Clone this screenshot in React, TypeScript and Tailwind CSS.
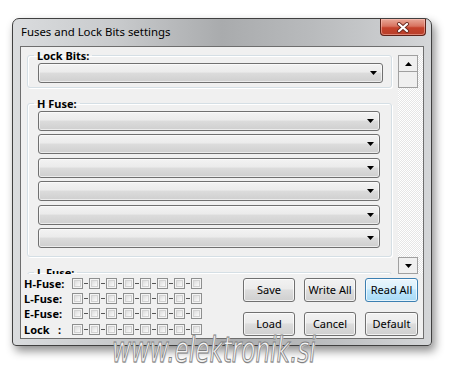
import React from "react";

const FONT = { fontFamily: '"Noto Sans", "Open Sans", sans-serif' };

function Combo({ wide }: { wide?: boolean }) {
  return (
    <div className={`relative h-[20px] ${wide ? "w-[345px]" : "w-[342px]"} rounded-[3px] border border-[#707070] bg-[linear-gradient(to_bottom,#f3f3f3_0%,#ebebeb_45%,#dcdcdc_50%,#cfcfcf_100%)] shadow-[inset_0_0_0_1px_rgba(255,255,255,0.6)] flex items-center justify-end pr-[5px]`}>
      <svg width="7" height="4" viewBox="0 0 7 4"><path d="M0 0H7L3.5 4Z" fill="#000" /></svg>
    </div>
  );
}

function Group({ label, children, className }: { label: string; children: React.ReactNode; className?: string }) {
  return (
    <fieldset className={`w-[365px] rounded-[3px] border border-[#d5dfe5] shadow-[inset_1px_1px_0_#fff,1px_1px_0_#fff] pl-[10px] pr-[8px] ${className ?? ""}`}>
      <legend className="ml-[-4px] px-[3px] text-[11px] font-bold leading-[15px] text-black">{label}</legend>
      {children}
    </fieldset>
  );
}

function Check() {
  return (
    <div className="w-[11px] h-[11px] border border-[#8e8f8f] bg-[#f4f4f4] p-[1px]">
      <div className="w-full h-full border border-[#d2d2d2] bg-[linear-gradient(135deg,#dcdcdc,#fbfbfb)]" />
    </div>
  );
}

function BitRow({ label }: { label: string }) {
  const items: React.ReactNode[] = [];
  for (let i = 0; i < 8; i++) {
    if (i > 0)
      items.push(
        <div key={"d" + i} className="w-[6px] flex justify-center">
          <div className="w-[4px] h-[1px] bg-[#555]" />
        </div>
      );
    items.push(<Check key={"c" + i} />);
  }
  return (
    <div className="h-[15.33px] flex items-center">
      <div className="w-[48px] text-[11px] font-bold leading-none text-black whitespace-pre">{label}</div>
      <div className="flex items-center">{items}</div>
    </div>
  );
}

function Btn({ children, focus }: { children: React.ReactNode; focus?: boolean }) {
  return (
    <div
      className={`h-[24px] rounded-[3px] border flex items-center justify-center text-[11px] text-black ${
        focus
          ? "border-[#3c7fb1] bg-[linear-gradient(to_bottom,#eaf6fd_0%,#d9f0fc_45%,#bee6fd_50%,#a7d9f5_100%)] shadow-[inset_0_0_0_1px_rgba(255,255,255,0.7)]"
          : "border-[#707070] bg-[linear-gradient(to_bottom,#f2f2f2_0%,#ebebeb_45%,#dddddd_50%,#cfcfcf_100%)] shadow-[inset_0_0_0_1px_rgba(255,255,255,0.7)]"
      }`}
    >
      {children}
    </div>
  );
}

function ScrollBtn({ up }: { up?: boolean }) {
  return (
    <div className="w-[20px] h-[17px] border border-[#a0a0a0] bg-[#f0f0f0] flex items-center justify-center">
      <svg width="7" height="4" viewBox="0 0 7 4">
        {up ? <path d="M3.5 0L7 4H0Z" fill="#000" /> : <path d="M0 0H7L3.5 4Z" fill="#000" />}
      </svg>
    </div>
  );
}

export default function App() {
  return (
    <div className="relative w-[452px] h-[371px] overflow-hidden bg-white pl-[12px] pt-[18px]" style={FONT}>
      <div className="w-[420px] h-[328px] flex flex-col rounded-t-[7px] rounded-b-[4px] border border-[#404040] shadow-[3px_5px_10px_rgba(0,0,0,0.45)] bg-[linear-gradient(to_right,#dadcde_0%,#c8cacc_25%,#a9abad_50%,#b9bbbd_72%,#d4d6d8_100%)]">
        {/* Title bar */}
        <div className="h-[27px] flex items-start justify-between pl-[8px] pr-[5px]">
          <div className="pt-[5px] text-[11.4px] leading-[16px] text-black">Fuses and Lock Bits settings</div>
          <div className="w-[46px] h-[17px] rounded-b-[4px] border border-t-0 border-[#5e2218] bg-[linear-gradient(to_bottom,#e9a898_0%,#d8735f_45%,#c5422b_55%,#b8402b_100%)] shadow-[inset_0_0_0_1px_rgba(255,200,190,0.5)] flex items-center justify-center">
            <svg width="14" height="11" viewBox="0 0 14 11">
              <path d="M3 2L11 9M11 2L3 9" stroke="#6b2a20" strokeWidth="4" strokeLinecap="round" />
              <path d="M3 2L11 9M11 2L3 9" stroke="#fff" strokeWidth="2.2" strokeLinecap="round" />
            </svg>
          </div>
        </div>
        {/* Client */}
        <div className="flex-1 mx-[7px] mb-[6px] border border-[#6e6e6e] bg-[#f0f0f0] flex flex-col">
          <div className="h-[227px] flex">
            <div className="flex-1 overflow-hidden pl-[6px] pt-[1px]">
              <Group label="Lock Bits:" className="pb-[4px]">
                <Combo wide />
              </Group>
              <Group label="H Fuse:" className="mt-[8px] pb-[8px]">
                <div className="flex flex-col gap-[3.4px]">
                  <Combo />
                  <Combo />
                  <Combo />
                  <Combo />
                  <Combo />
                  <Combo />
                </div>
              </Group>
              <Group label="L Fuse:" className="mt-[8px] pb-[8px]">
                <div className="flex flex-col gap-[3.4px]">
                  <Combo />
                  <Combo />
                </div>
              </Group>
            </div>
            <div className="w-[25px] pt-[8px] flex flex-col">
              <div className="flex-1 flex flex-col bg-[repeating-conic-gradient(#ffffff_0_25%,#e6e6e6_0_50%)] bg-[length:2px_2px]">
                <ScrollBtn up />
                <div className="w-[20px] h-[16px] border border-t-0 border-[#a0a0a0] bg-[#f0f0f0]" />
                <div className="flex-1" />
                <ScrollBtn />
              </div>
            </div>
          </div>
          <div className="flex-1 flex justify-between pl-[3px] pr-[5px]">
            <div className="pt-[1.5px] flex flex-col">
              <BitRow label="H-Fuse:" />
              <BitRow label="L-Fuse:" />
              <BitRow label="E-Fuse:" />
              <BitRow label={"Lock   :"} />
            </div>
            <div className="pt-[4px] grid grid-cols-[52px_52px_53px] gap-x-[9px] gap-y-[10px] auto-rows-[24px]">
              <Btn>Save</Btn>
              <Btn>Write All</Btn>
              <Btn focus>Read All</Btn>
              <Btn>Load</Btn>
              <Btn>Cancel</Btn>
              <Btn>Default</Btn>
            </div>
          </div>
        </div>
      </div>
      {/* watermark */}
      <div
        className="absolute left-[112px] top-[333px] origin-left scale-x-[0.66] text-[35px] italic leading-none text-[#f2f2f2] [-webkit-text-stroke:1px_#808080] [text-shadow:1px_1px_0_#cfcfcf] whitespace-nowrap"
        style={{ fontFamily: '"DejaVu Sans", sans-serif' }}
      >
        www.elektronik.si
      </div>
    </div>
  );
}
